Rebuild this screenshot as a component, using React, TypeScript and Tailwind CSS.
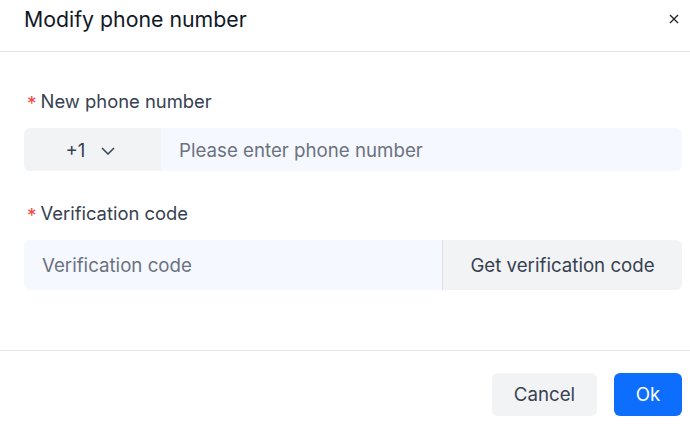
import React, { useState } from "react";

const font = { fontFamily: "Inter, 'Noto Sans', sans-serif" };

const App = () => {
  const [phone, setPhone] = useState("");
  const [code, setCode] = useState("");

  return (
    <div className="w-[690px] h-[430px] bg-white overflow-hidden" style={font}>
      {/* header */}
      <div className="h-[52px] flex items-start justify-between pl-6 pr-[10px] pt-[5px] border-b border-[#e3e4e8]">
        <h1 className="text-[21.3px] leading-[28px] text-[#111827]">Modify phone number</h1>
        <button className="mt-[8px] w-[12px] h-[12px] flex items-center justify-center text-[#222]">
          <svg width="10" height="10" viewBox="0 0 10 10" fill="none" stroke="currentColor" strokeWidth="1.3">
            <path d="M1 1L9 9M9 1L1 9" />
          </svg>
        </button>
      </div>

      {/* body */}
      <div className="pl-6 pr-2 pt-[38px] h-[299px] border-b border-[#e3e4e8]">
        <label className="flex items-center h-6 text-[18.4px] text-[#374151]">
          <span className="text-[#ef4444] text-[19px] leading-none mr-[4px] ml-[3px] mt-[3px]">*</span>
          New phone number
        </label>
        <div className="mt-[14px] flex h-[43px] rounded-[6px] overflow-hidden">
          <button className="w-[137px] bg-[#f2f3f5] flex items-center justify-center gap-[16px] text-[18.6px] text-[#374151] pr-[4px] pt-[2px]">
            +1
            <svg width="14" height="8" viewBox="0 0 14 8" fill="none" stroke="#374151" strokeWidth="1.5">
              <path d="M1 1L7 7L13 1" />
            </svg>
          </button>
          <input
            value={phone}
            onChange={(e) => setPhone(e.target.value)}
            placeholder="Please enter phone number"
            className="flex-1 bg-[#f5f8fe] px-[18px] pt-[3px] text-[18.7px] text-[#374151] placeholder:text-[#6b7280] outline-none"
          />
        </div>

        <label className="mt-[31px] flex items-center h-6 text-[18.4px] text-[#374151]">
          <span className="text-[#ef4444] text-[19px] leading-none mr-[4px] ml-[3px] mt-[3px]">*</span>
          Verification code
        </label>
        <div className="mt-[14px] flex h-[50px] rounded-[6px] overflow-hidden">
          <input
            value={code}
            onChange={(e) => setCode(e.target.value)}
            placeholder="Verification code"
            className="w-[418px] bg-[#f5f8fe] px-[18px] pt-[2px] text-[18.7px] text-[#374151] placeholder:text-[#6b7280] outline-none"
          />
          <button className="flex-1 bg-[#f2f3f5] border-l border-[#dcdee2] pt-[2px] text-[18.7px] text-[#374151]">
            Get verification code
          </button>
        </div>
      </div>

      {/* footer */}
      <div className="flex justify-end gap-[17px] pr-2 pt-[22px]">
        <button className="w-[105px] h-[43px] rounded-[6px] bg-[#f2f3f5] pt-[2px] text-[18.7px] text-[#374151]">Cancel</button>
        <button className="w-[68px] h-[43px] rounded-[6px] bg-[#0d6efd] pt-[2px] text-[18.7px] text-white">Ok</button>
      </div>
    </div>
  );
};

export default App;
